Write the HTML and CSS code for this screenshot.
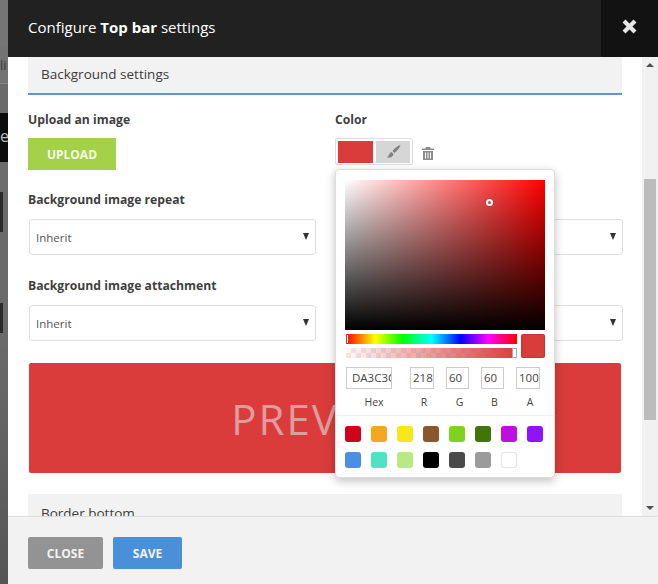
FILE: index.html
```html
<!DOCTYPE html>
<html lang="en">
<head>
<meta charset="utf-8">
<title>Configure Top bar settings</title>
<link rel="stylesheet" href="styles.css">
</head>
<body>
<div class="page">
  <div class="backdrop">
    <div class="bd-a"></div>
    <div class="bd-lit">li</div>
    <div class="bd-b"></div>
    <div class="bd-black">e</div>
    <div class="bd-c"></div>
    <div class="bd-dark bd-d1"></div>
    <div class="bd-e"></div>
    <div class="bd-dark bd-d2"></div>
    <div class="bd-f"></div>
  </div>
  <div class="modal">
    <header class="head">
      <h1 class="title">Configure <b>Top bar</b> settings</h1>
      <button class="x" aria-label="Close">
        <svg width="15" height="15" viewBox="0 0 15 15"><path d="M2 2l11 11M13 2L2 13" stroke="#e6e6e6" stroke-width="4.200" fill="none"/></svg>
      </button>
    </header>
    <div class="body">
      <div class="scroll">
        <div class="section">Background settings</div>
        <div class="grid">
          <div class="field">
            <div class="label">Upload an image</div>
            <button class="upload">UPLOAD</button>
          </div>
          <div class="field">
            <div class="label">Color</div>
            <div class="colorrow">
              <div class="colorbtn">
                <span class="cur"></span>
                <span class="brush">
                  <svg width="18" height="16" viewBox="0 0 18 16"><path d="M16.500 1C14 1.600 10.500 4.500 8.500 7l2 2c2.500-2 5.500-5.500 6-8zM7.500 8C5.500 8.300 5.500 11 3 13.500c3 .5 6-.5 6.500-3.500z" fill="#808080"/></svg>
                </span>
              </div>
              <svg class="trash" width="12" height="13" viewBox="0 0 12 13"><path d="M4 0h4l.6 1.500H12V3H0V1.500h3.400zM1 4h10v9H1zM3 5.500v6h1v-6zM5.500 5.500v6h1v-6zM8 5.500v6h1v-6z" fill="#8c8c8c" fill-rule="evenodd"/></svg>
            </div>
            <div class="picker">
              <div class="sat"><span class="dot"></span></div>
              <div class="sliders">
                <div class="bars">
                  <div class="hue"><span class="hue-h"></span></div>
                  <div class="alpha"><span class="alpha-h"></span></div>
                </div>
                <div class="swatch"></div>
              </div>
              <div class="inputs">
                <div class="cell c-hex"><div class="in">DA3C3C</div><div class="cap">Hex</div></div>
                <div class="cell c-r"><div class="in">218</div><div class="cap">R</div></div>
                <div class="cell c-g"><div class="in">60</div><div class="cap">G</div></div>
                <div class="cell c-b"><div class="in">60</div><div class="cap">B</div></div>
                <div class="cell c-a"><div class="in">100</div><div class="cap">A</div></div>
              </div>
              <div class="presets">
                <span class="p p1"></span><span class="p p2"></span><span class="p p3"></span><span class="p p4"></span><span class="p p5"></span><span class="p p6"></span><span class="p p7"></span><span class="p p8"></span>
                <span class="p p9"></span><span class="p p10"></span><span class="p p11"></span><span class="p p12"></span><span class="p p13"></span><span class="p p14"></span><span class="p p15"></span>
              </div>
            </div>
          </div>
          <div class="field row2">
            <div class="label">Background image repeat</div>
            <div class="select">Inherit<span class="arrow"></span></div>
          </div>
          <div class="field row2">
            <div class="label">&nbsp;</div>
            <div class="select"><span class="arrow"></span></div>
          </div>
          <div class="field row3">
            <div class="label">Background image attachment</div>
            <div class="select">Inherit<span class="arrow"></span></div>
          </div>
          <div class="field row3">
            <div class="label">&nbsp;</div>
            <div class="select"><span class="arrow"></span></div>
          </div>
        </div>
        <div class="preview">PREVIEW</div>
        <div class="section section-next">Border bottom</div>
      </div>
      <div class="bar">
        <span class="up"></span>
        <div class="track"><div class="thumb"></div></div>
        <span class="down"></span>
      </div>
    </div>
    <footer class="foot">
      <button class="btn close">CLOSE</button>
      <button class="btn save">SAVE</button>
    </footer>
  </div>
</div>
</body>
</html>
```
FILE: styles.css
```css
* { box-sizing: border-box; }
html, body { margin: 0; height: 100%; }
body { font-family: "Open Sans", sans-serif; color: #3c3c3c; overflow: hidden; background: #fff; }
.page { display: flex; width: 658px; height: 584px; }

.backdrop { width: 8px; flex: none; display: flex; flex-direction: column; overflow: hidden; background: #6a6a6a; }
.bd-a { height: 47px; background: #757575; }
.bd-lit { height: 37px; background: #737373; color: #3a3a3a; font-size: 13px; line-height: 37px; border-bottom: 1px solid #888; }
.bd-b { height: 29px; background: #6a6a6a; }
.bd-black { height: 49px; background: #0c0c0c; color: #bbb; font-size: 16px; line-height: 46px; }
.bd-c { height: 30px; background: #6c6c6c; }
.bd-dark { width: 3px; background: #2b2b2b; }
.bd-d1 { height: 40px; }
.bd-e { height: 71px; background: #6a6a6a; }
.bd-d2 { height: 30px; }
.bd-f { flex: 1; background: linear-gradient(#6b6b6b, #555); }

.modal { flex: 1; display: flex; flex-direction: column; min-width: 0; }
.head { height: 57px; flex: none; background: #212121; display: flex; align-items: stretch; justify-content: space-between; }
.title { margin: 0; padding: 0 0 4px 20px; align-self: center; color: #fff; font-size: 15px; font-weight: 400; }
.title b { font-weight: 700; }
.x { width: 57px; border: 0; padding: 0 0 4px; background: #121212; display: flex; align-items: center; justify-content: center; }

.body { flex: 1; display: flex; min-height: 0; background: #fff; border-bottom: 1px solid #dcdcdc; }
.scroll { flex: 1; padding: 0 20px; overflow: hidden; min-width: 0; }
.section { height: 38px; padding: 7px 13px 0; background: #f2f2f2; border-bottom: 2px solid #6396c4; font-size: 13.500px; line-height: 20px; color: #3c3c3c; }
.section-next { margin: 21px 0 0; border-bottom: 0; padding-top: 9px; }

.grid { display: grid; grid-template-columns: 288px 288px; column-gap: 19px; margin-top: 16px; }
.field { position: relative; }
.label { font-size: 12.200px; font-weight: 700; line-height: 17px; height: 17px; color: #3f3f3f; margin-bottom: 10px; }
.row2 { padding-top: 21px; }
.row3 { padding-top: 22px; }
.row2 .label, .row3 .label { margin-bottom: 11px; }
.upload { display: block; width: 88px; height: 32px; border: 0; padding: 0; background: #a5d14a; color: #f4fbe4; font: 700 12px "Open Sans", sans-serif; }

.colorrow { display: flex; align-items: flex-start; gap: 9px; height: 32px; }
.colorbtn { width: 78px; height: 27px; border: 1px solid #ddd; border-radius: 2px; padding: 2px 2px 1px; display: flex; gap: 3px; }
.cur { width: 35px; background: #da3c3c; }
.brush { width: 35px; background: #d6d6d6; display: flex; align-items: center; justify-content: center; }
.trash { margin-top: 9px; }

.select { height: 36px; margin: 0 0 0 1px; border: 1px solid #dfdfdf; border-radius: 3px; padding: 0 6px; font-size: 11.500px; line-height: 35px; color: #555; position: relative; }
.arrow { position: absolute; right: 6px; top: 13px; width: 0; height: 0; border-left: 3px solid transparent; border-right: 3px solid transparent; border-top: 7px solid #333; }

.picker { position: absolute; left: 0; top: 58px; z-index: 5; width: 220px; height: 309px; padding: 10px 9px 0; background: #fff; border: 1px solid #ddd; border-radius: 4px; box-shadow: 0 3px 10px rgba(0,0,0,.25); }
.sat { position: relative; width: 200px; height: 150px; background: linear-gradient(to top, #000, transparent), linear-gradient(to right, #fff, #f00); }
.dot { position: absolute; left: 141px; top: 19px; width: 7px; height: 7px; border: 2px solid #fff; border-radius: 50%; box-shadow: 0 0 1px #333; }
.sliders { display: flex; justify-content: space-between; margin-top: 4px; }
.bars { width: 171px; margin-left: 1px; }
.hue { position: relative; height: 10px; background: linear-gradient(to right, #f00, #ff0 17%, #0f0 33%, #0ff 50%, #00f 67%, #f0f 83%, #f00); }
.hue-h { position: absolute; left: 0; top: 0; width: 3px; height: 10px; background: #fff; border: 1px solid #c33; }
.alpha { position: relative; height: 10px; margin-top: 4px; background: linear-gradient(to right, rgba(218,60,60,.03), #da3c3c), repeating-conic-gradient(#eee 0 25%, #fff 0 50%) 0 0 / 10px 10px; }
.alpha-h { position: absolute; right: 0; top: 0; width: 5px; height: 10px; background: #fff; border: 1px solid #aaa; }
.swatch { width: 24px; height: 24px; background: #da3c3c; border-radius: 2px; box-shadow: inset 0 0 0 1px rgba(0,0,0,.12); }
.inputs { display: flex; margin: 9px 0 0 1px; height: 48px; }
.cell { display: flex; flex-direction: column; align-items: center; font-size: 11.500px; color: #444; }
.in { height: 22px; width: 100%; border: 1px solid #ccc; line-height: 20px; padding-left: 5px; overflow: hidden; white-space: nowrap; text-align: left; }
.cap { font-size: 10.500px; line-height: 15px; margin-top: 6px; padding-left: 4px; }
.c-hex { width: 46px; }
.c-hex .cap { padding-left: 10px; }
.c-r { width: 24px; margin-left: 18px; }
.c-g { width: 23px; margin-left: 12px; }
.c-b { width: 23px; margin-left: 12px; }
.c-a { width: 24px; margin-left: 12px; }
.c-r .in, .c-g .in, .c-b .in, .c-a .in { padding-left: 2px; }
.presets { display: grid; grid-template-columns: repeat(8, 16px); gap: 10px; margin: 0 -9px; padding: 10px 9px 0; border-top: 1px solid #f0f0f0; }
.p { width: 16px; height: 16px; border-radius: 3px; }
.p1 { background: #d0021b; }
.p2 { background: #f5a623; }
.p3 { background: #f8e71c; }
.p4 { background: #8b572a; }
.p5 { background: #7ed321; }
.p6 { background: #417505; }
.p7 { background: #bd10e0; }
.p8 { background: #9013fe; }
.p9 { background: #4a90e2; }
.p10 { background: #50e3c2; }
.p11 { background: #b8e986; }
.p12 { background: #000; }
.p13 { background: #4a4a4a; }
.p14 { background: #9b9b9b; }
.p15 { background: #fff; box-shadow: inset 0 0 0 1px #e4e4e4; }

.preview { height: 110px; margin: 22px 1px 0; background: #da3c3c; border-radius: 2px; display: flex; align-items: center; justify-content: center; font-size: 42px; letter-spacing: 2px; color: #dd9d9d; }

.bar { width: 16px; flex: none; background: #f1f1f1; display: flex; flex-direction: column; align-items: center; }
.up, .down { flex: none; width: 0; height: 0; border-left: 4px solid transparent; border-right: 4px solid transparent; }
.up { margin-top: 6px; border-bottom: 4px solid #505050; }
.down { margin-bottom: 6px; border-top: 4px solid #505050; }
.track { flex: 1; width: 100%; padding: 112px 2px 0; }
.thumb { height: 241px; background: #bcbcbc; }

.foot { height: 67px; flex: none; background: #f2f2f2; display: flex; align-items: flex-start; gap: 10px; padding: 20px 20px 0; }
.btn { height: 32px; border: 0; padding: 0; border-radius: 2px; color: #f4f4f4; font: 700 12px "Open Sans", sans-serif; }
.close { width: 75px; background: #939393; }
.save { width: 69px; background: #4a90d9; }
```
